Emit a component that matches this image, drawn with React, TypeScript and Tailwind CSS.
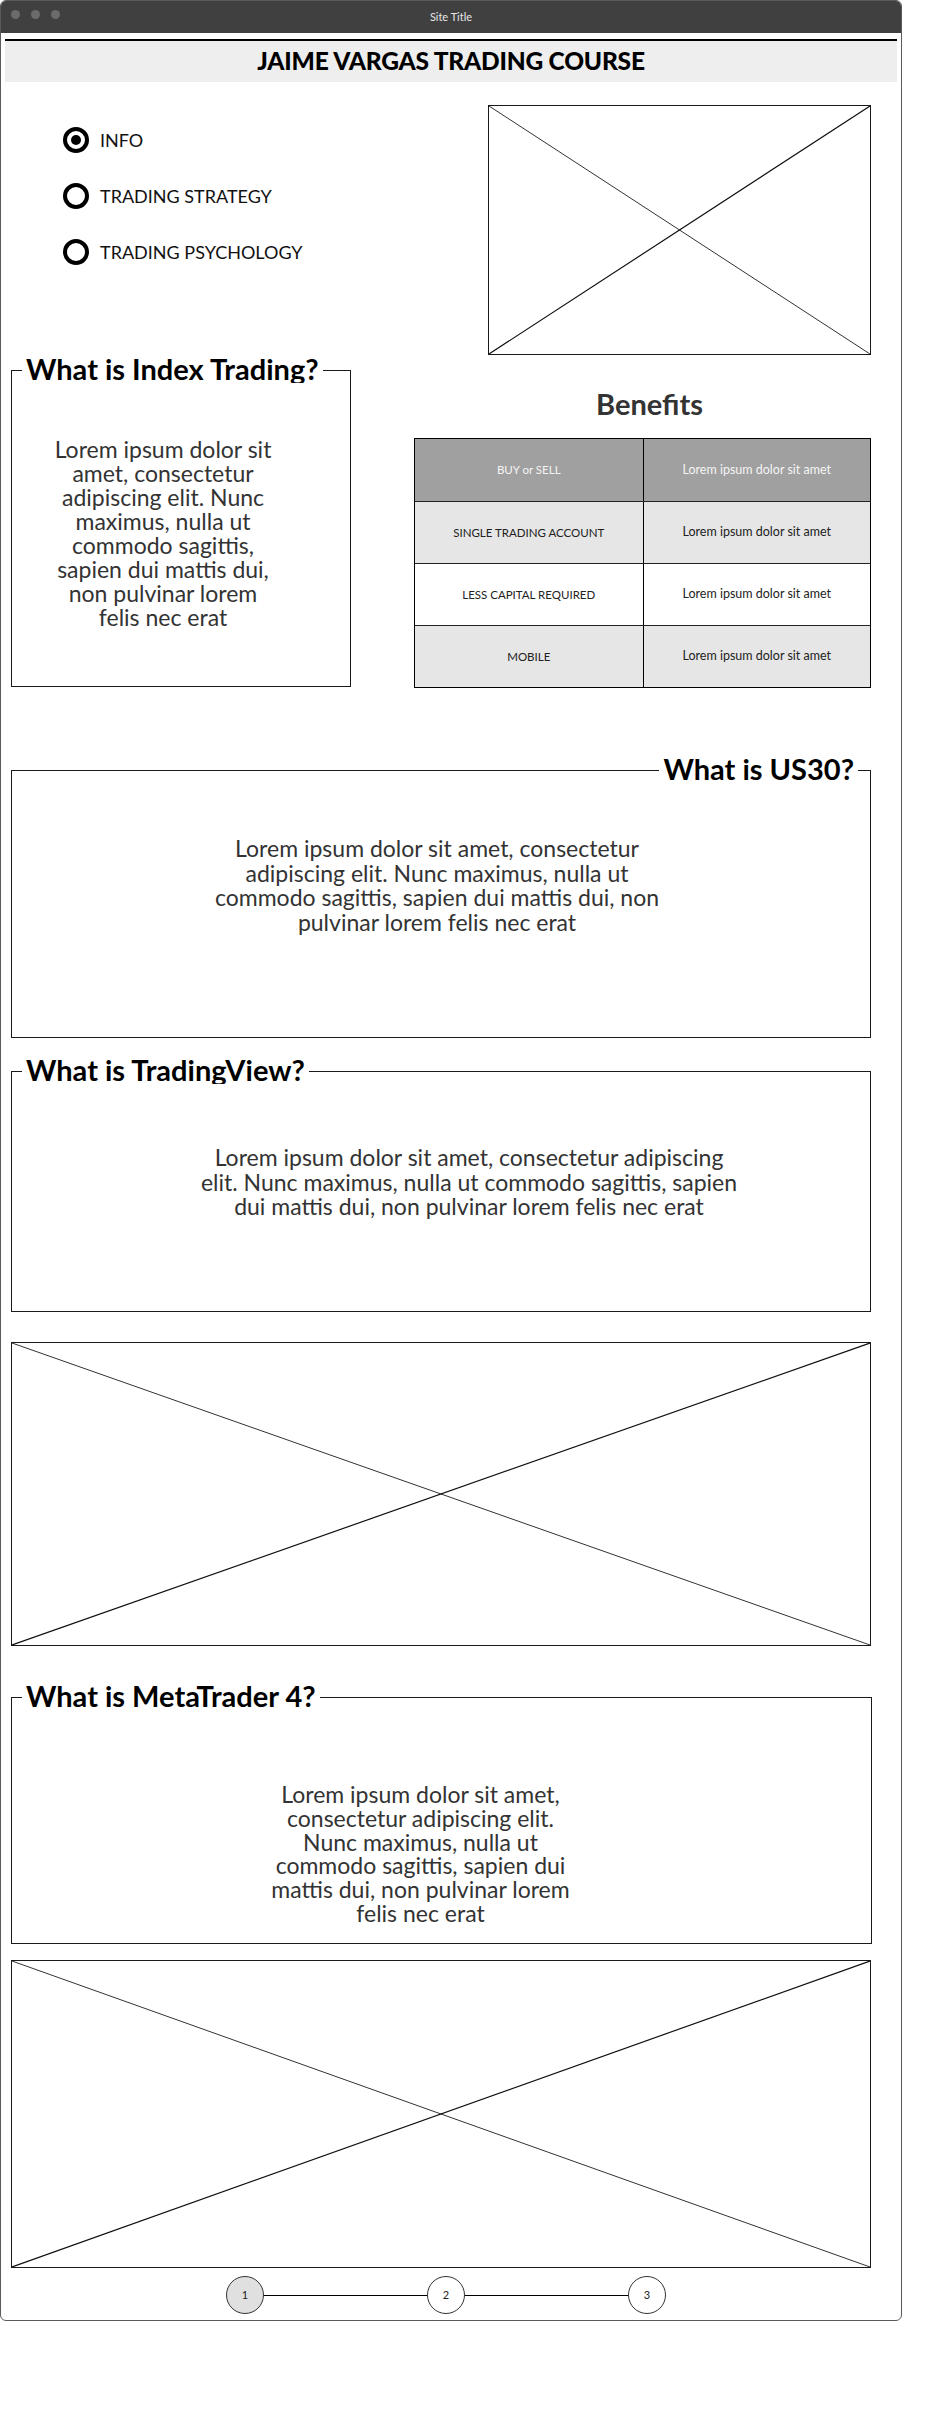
import React from "react"

type SectionProps = {
  title: string
  right?: boolean
  className?: string
  bodyClass?: string
  children?: React.ReactNode
}

// wireframe box with the title sitting on the top border
function Section({ title, right, className = "", bodyClass = "", children }: SectionProps) {
  return (
    <fieldset className={`border border-[#1a1a1a] ${className}`}>
      <legend
        className={[
          right ? "ml-auto mr-[12px]" : "ml-[10px]",
          "h-[26px] overflow-hidden px-[4px] text-[29px] font-bold leading-[24px] text-black",
        ].join(" ")}
      >
        {title}
      </legend>
      <div className={bodyClass}>{children}</div>
    </fieldset>
  )
}

function Placeholder({ className = "" }: { className?: string }) {
  return (
    <div className={`border-[1.5px] border-[#1a1a1a] ${className}`}>
      <svg className="block h-full w-full" viewBox="0 0 100 100" preserveAspectRatio="none">
        <line x1="0" y1="0" x2="100" y2="100" stroke="#333" strokeWidth="1" vectorEffect="non-scaling-stroke" />
        <line x1="100" y1="0" x2="0" y2="100" stroke="#111" strokeWidth="1.2" vectorEffect="non-scaling-stroke" />
      </svg>
    </div>
  )
}

function Radio({ label, checked }: { label: string; checked?: boolean }) {
  return (
    <div className="flex h-[26px] items-center gap-[11px]">
      <span className="flex h-[26px] w-[26px] items-center justify-center rounded-full border-[4px] border-black">
        {checked && <span className="h-[10px] w-[10px] rounded-full bg-black" />}
      </span>
      <span className="text-[18px] leading-none text-[#111]">{label}</span>
    </div>
  )
}

const rows = [
  { k: "BUY or SELL", head: true },
  { k: "SINGLE TRADING ACCOUNT", bg: "bg-[#e6e6e6]" },
  { k: "LESS CAPITAL REQUIRED", bg: "bg-white" },
  { k: "MOBILE", bg: "bg-[#e6e6e6]" },
]

export default function App() {
  return (
    <div className="min-h-[2419px] w-[940px] bg-white font-['Lato',sans-serif]">
      <div className="w-[902px] overflow-hidden rounded-[6px] border border-[#5a5a5a] bg-white">
        {/* title bar */}
        <div className="relative flex h-[32px] items-center justify-center bg-[#404040]">
          <div className="absolute left-[10px] top-[9px] flex gap-[11px]">
            <span className="h-[9px] w-[9px] rounded-full bg-[#6b6b6b]" />
            <span className="h-[9px] w-[9px] rounded-full bg-[#6b6b6b]" />
            <span className="h-[9px] w-[9px] rounded-full bg-[#6b6b6b]" />
          </div>
          <span className="text-[11px] text-[#e6e6e6]">Site Title</span>
        </div>

        {/* header */}
        <div className="mx-[4px] mt-[6px] flex h-[43px] items-center justify-center border-t-2 border-black bg-[#eeeeee]">
          <h1 className="text-[24.5px] font-black tracking-[-0.2px] text-black">JAIME VARGAS TRADING COURSE</h1>
        </div>

        {/* radios + image */}
        <div className="flex items-start">
          <div className="ml-[62px] flex flex-col gap-[30px] pt-[45px]">
            <Radio label="INFO" checked />
            <Radio label="TRADING STRATEGY" />
            <Radio label="TRADING PSYCHOLOGY" />
          </div>
          <Placeholder className="ml-auto mr-[30px] mt-[23px] h-[250px] w-[383px]" />
        </div>

        {/* index trading + benefits */}
        <div className="mt-[2px] flex items-start">
          <Section
            title="What is Index Trading?"
            className="ml-[10px] w-[340px]"
            bodyClass="flex h-[303px] items-center justify-center pr-[36px] pb-[4px] text-center text-[23px] leading-[24px] text-[#333]"
          >
            <p>
              Lorem ipsum dolor sit
              <br />
              amet, consectetur
              <br />
              adipiscing elit. Nunc
              <br />
              maximus, nulla ut
              <br />
              commodo sagittis,
              <br />
              sapien dui mattis dui,
              <br />
              non pulvinar lorem
              <br />
              felis nec erat
            </p>
          </Section>

          <div className="ml-[63px] w-[457px] pt-[30px]">
            <h2 className="pl-[14px] text-center text-[29px] font-bold leading-[34px] text-[#333]">Benefits</h2>
            <div className="mt-[17px] border border-black">
              {rows.map((r, i) => (
                <div
                  key={r.k}
                  className={[
                    "grid h-[62px] grid-cols-2 text-[12.5px]",
                    i > 0 ? "border-t border-[#222]" : "",
                    r.head ? "bg-[#a0a0a0] text-[#f4f4f4]" : `${r.bg} text-[#222]`,
                  ].join(" ")}
                >
                  <div className="flex items-center justify-center text-[11.5px]">{r.k}</div>
                  <div className="flex items-center justify-center border-l border-black">Lorem ipsum dolor sit amet</div>
                </div>
              ))}
            </div>
          </div>
        </div>

        {/* US30 */}
        <Section
          title="What is US30?"
          right
          className="ml-[10px] mt-[69px] w-[860px]"
          bodyClass="h-[254px] pt-[53px] pr-[8px] text-center text-[23px] leading-[24.5px] text-[#333]"
        >
          <p>
            Lorem ipsum dolor sit amet, consectetur
            <br />
            adipiscing elit. Nunc maximus, nulla ut
            <br />
            commodo sagittis, sapien dui mattis dui, non
            <br />
            pulvinar lorem felis nec erat
          </p>
        </Section>

        {/* TradingView */}
        <Section
          title="What is TradingView?"
          className="ml-[10px] mt-[20px] w-[860px]"
          bodyClass="h-[227px] pt-[61px] pl-[56px] text-center text-[23px] leading-[24.5px] text-[#333]"
        >
          <p>
            Lorem ipsum dolor sit amet, consectetur adipiscing
            <br />
            elit. Nunc maximus, nulla ut commodo sagittis, sapien
            <br />
            dui mattis dui, non pulvinar lorem felis nec erat
          </p>
        </Section>

        <Placeholder className="ml-[10px] mt-[30px] h-[304px] w-[860px]" />

        {/* MetaTrader */}
        <Section
          title="What is MetaTrader 4?"
          className="ml-[10px] mt-[38px] w-[861px]"
          bodyClass="h-[233px] pt-[73px] pr-[42px] text-center text-[23px] leading-[23.8px] text-[#333]"
        >
          <p>
            Lorem ipsum dolor sit amet,
            <br />
            consectetur adipiscing elit.
            <br />
            Nunc maximus, nulla ut
            <br />
            commodo sagittis, sapien dui
            <br />
            mattis dui, non pulvinar lorem
            <br />
            felis nec erat
          </p>
        </Section>

        <Placeholder className="ml-[10px] mt-[16px] h-[308px] w-[860px]" />

        {/* stepper */}
        <div className="mt-[8px] flex items-center pb-[6px] pl-[225px]">
          <span className="flex h-[38px] w-[38px] items-center justify-center rounded-full border border-[#333] bg-[#e0e0e0] text-[11px] text-[#222]">1</span>
          <span className="h-px w-[163px] bg-black" />
          <span className="flex h-[38px] w-[38px] items-center justify-center rounded-full border border-[#333] bg-white text-[11px] text-[#222]">2</span>
          <span className="h-px w-[163px] bg-black" />
          <span className="flex h-[38px] w-[38px] items-center justify-center rounded-full border border-[#333] bg-white text-[11px] text-[#222]">3</span>
        </div>
      </div>
    </div>
  )
}
